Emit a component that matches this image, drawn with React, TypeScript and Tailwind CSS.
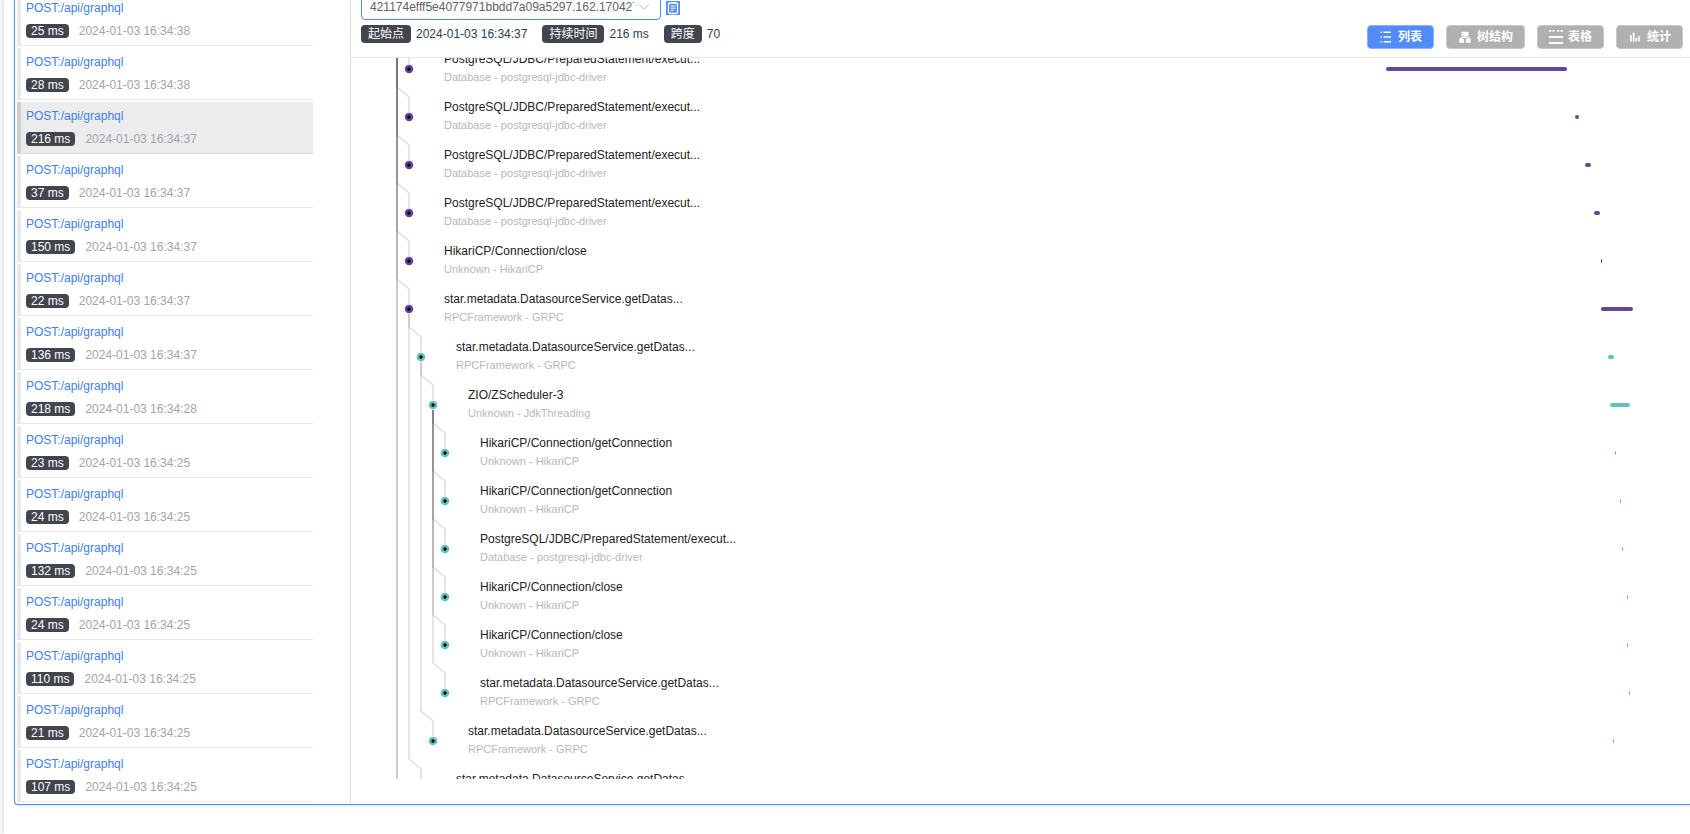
import React from 'react';

const FONT = "font-['Liberation_Sans','Noto_Sans_CJK_SC',sans-serif]";

const traces = [
    { duration: 25, time: '2024-01-03 16:34:38' },
    { duration: 28, time: '2024-01-03 16:34:38' },
    { duration: 216, time: '2024-01-03 16:34:37' },
    { duration: 37, time: '2024-01-03 16:34:37' },
    { duration: 150, time: '2024-01-03 16:34:37' },
    { duration: 22, time: '2024-01-03 16:34:37' },
    { duration: 136, time: '2024-01-03 16:34:37' },
    { duration: 218, time: '2024-01-03 16:34:28' },
    { duration: 23, time: '2024-01-03 16:34:25' },
    { duration: 24, time: '2024-01-03 16:34:25' },
    { duration: 132, time: '2024-01-03 16:34:25' },
    { duration: 24, time: '2024-01-03 16:34:25' },
    { duration: 110, time: '2024-01-03 16:34:25' },
    { duration: 21, time: '2024-01-03 16:34:25' },
    { duration: 107, time: '2024-01-03 16:34:25' },
];

const SELECTED = 2;

const PREPARED = 'PostgreSQL/JDBC/PreparedStatement/execut...';
const DATASOURCE = 'star.metadata.DatasourceService.getDatas...';
const JDBC = 'Database - postgresql-jdbc-driver';
const HIKARI = 'Unknown - HikariCP';
const GRPC = 'RPCFramework - GRPC';

// start and length are percentages of the timeline column,
// parent is the row index of the parent span (-2 is scrolled out above)
const spans = [
    { name: PREPARED, layer: JDBC, depth: 1, parent: -2, start: 66.2, length: 20.1 },
    { name: PREPARED, layer: JDBC, depth: 1, parent: -2, start: 87.25, length: 0.42 },
    { name: PREPARED, layer: JDBC, depth: 1, parent: -2, start: 88.3, length: 0.65 },
    { name: PREPARED, layer: JDBC, depth: 1, parent: -2, start: 89.3, length: 0.65 },
    { name: 'HikariCP/Connection/close', layer: HIKARI, depth: 1, parent: -2, start: 90.12, length: 0.12 },
    { name: DATASOURCE, layer: GRPC, depth: 1, parent: -2, start: 90.12, length: 3.5 },
    { name: DATASOURCE, layer: GRPC, depth: 2, parent: 5, start: 90.9, length: 0.65 },
    { name: 'ZIO/ZScheduler-3', layer: 'Unknown - JdkThreading', depth: 3, parent: 6, start: 91.15, length: 2.2 },
    { name: 'HikariCP/Connection/getConnection', layer: HIKARI, depth: 4, parent: 7, start: 91.67, length: 0.12 },
    { name: 'HikariCP/Connection/getConnection', layer: HIKARI, depth: 4, parent: 7, start: 92.23, length: 0.12 },
    { name: PREPARED, layer: JDBC, depth: 4, parent: 7, start: 92.45, length: 0.12 },
    { name: 'HikariCP/Connection/close', layer: HIKARI, depth: 4, parent: 7, start: 93.01, length: 0.12 },
    { name: 'HikariCP/Connection/close', layer: HIKARI, depth: 4, parent: 7, start: 93.01, length: 0.12 },
    { name: DATASOURCE, layer: GRPC, depth: 4, parent: 7, start: 93.23, length: 0.12 },
    { name: DATASOURCE, layer: GRPC, depth: 3, parent: 6, start: 91.45, length: 0.12 },
    { name: DATASOURCE, layer: GRPC, depth: 2, parent: 5, start: 93.3, length: 0.12 },
];

// siblings that end below the visible part of the tree
const hiddenLinks = [
    { depth: 1, parent: -2, row: 18 },
    { depth: 1, parent: -2, row: 20 },
];

const ROW = 48;
const STEP = 12;

const dotX = (depth: number) => 5 + depth * STEP;
const dotY = (row: number) => row * ROW + ROW / 2;

const linkPath = (depth: number, parent: number, row: number) => {
    const sx = dotX(depth - 1);
    const x = dotX(depth);
    const y = dotY(row);
    return `M${sx} ${dotY(parent) + 5}L${sx} ${y - 30}L${x} ${y - 20}L${x} ${y - 5}`;
};

const spanColor = (row: number) => (row < 6 ? '#61469b' : '#65c0ba');

const ListIcon = () => (
    <svg viewBox="0 0 14 14" className="size-3.5" fill="currentColor" aria-hidden="true">
        <path d="M1.500 1.500H3V3H1.500zM1.500 6.300H3v1.500H1.500zM1.500 11H3v1.500H1.500zM4.500 1.500H12V3H4.500zM4.500 6.300H12v1.500H4.500zM4.500 11H12v1.500H4.500z" />
    </svg>
);

const TreeIcon = () => (
    <svg viewBox="0 0 14 14" className="size-3.5" fill="currentColor" aria-hidden="true">
        <path d="M3.500 1.800h7v4.200H8.200v.7h2.400l1.500 1.700v.6h.6v3.700H7.900V9h1.900V8H4.200v1h1.900v3.700H1.300V9h.6v-.6l1.500-1.700h2.400V6H3.500z" />
    </svg>
);

const TableIcon = () => (
    <svg viewBox="0 0 14 14" className="size-3.5" fill="currentColor" aria-hidden="true">
        <path d="M0 0h2.200v1.800H0zM3.500 0h2v1.800h-2zM8 0h2.200v1.800H8zM11.500 0h2.200v1.800h-2.200zM0 6h14v2H0zM0 12h14v2H0z" />
    </svg>
);

const StatIcon = () => (
    <svg viewBox="0 0 14 14" className="size-3.5" fill="currentColor" aria-hidden="true">
        <path d="M2 5h1.700v6.500H2zM4.800 2.500h1.700v9H4.800zM7.600 8h1.600v3.500H7.600zM10.200 6h1.500v5.500h-1.500z" />
    </svg>
);

const views = [
    { label: '列表', icon: <ListIcon />, active: true },
    { label: '树结构', icon: <TreeIcon />, active: false },
    { label: '表格', icon: <TableIcon />, active: false },
    { label: '统计', icon: <StatIcon />, active: false },
];

const summary = [
    { label: '起始点', value: '2024-01-03 16:34:37' },
    { label: '持续时间', value: '216 ms' },
    { label: '跨度', value: '70' },
];

const TraceList = () => (
    <ul className="w-[336px] shrink-0 border-r border-[#dcdcdc] pl-0.5 pr-[37px] -mt-1.5 flex flex-col gap-0.5 pb-0.5">
        {traces.map((trace, i) => (
            <li
                key={i}
                className={`h-[52px] border-b border-l-4 pl-[5px] pt-[5px] ${
                    i === SELECTED
                        ? 'bg-[#ececec] border-b-[#d8d8d8] border-l-[#d0d0d0]'
                        : 'border-b-[#e8e8e8] border-l-[#e9e9e9]'
                }`}
            >
                <a href="#trace" className="block leading-[18px] text-[#4280ea]">
                    POST:/api/graphql
                </a>
                <div className="mt-[7px] flex items-center gap-2.5 leading-[14px]">
                    <span className="rounded bg-[#40454e] px-[5px] text-white">{trace.duration} ms</span>
                    <span className="text-[#a0a4ae]">{trace.time}</span>
                </div>
            </li>
        ))}
    </ul>
);

const TraceHeader = () => (
    <header className="h-[58px] shrink-0 border-b border-[#e6e6e6] pl-2.5 pr-[7px]">
        <div className="-mt-[7px] flex items-center gap-[5px]">
            <div className="flex h-[27px] w-[300px] items-center gap-1 rounded border border-[#4f87ee] px-2">
                <input
                    type="text"
                    aria-label="Trace ID"
                    readOnly
                    defaultValue="421174efff5e4077971bbdd7a09a5297.162.17042708771234567"
                    className="w-[264px] text-[#606266] outline-none"
                />
                <svg viewBox="0 0 12 12" className="size-3 shrink-0" fill="none" stroke="#b4b8c0" aria-hidden="true">
                    <path d="M1 3.500 6 8.500 11 3.500" />
                </svg>
            </div>
            <button type="button" aria-label="Copy" className="mt-[3px]">
                <svg viewBox="0 0 14 14" className="size-3.5" aria-hidden="true">
                    <rect width="14" height="14" fill="#5a8ff5" />
                    <rect x="2.500" y="2" width="9" height="10.500" rx="1.500" fill="none" stroke="#fff" strokeWidth="1.300" />
                    <path d="M4.500 1.500h5M4.800 5h4.600M4.800 7.200h4.600M4.800 9.400h2.800" stroke="#fff" />
                </svg>
            </button>
        </div>
        <div className="flex items-start justify-between pt-[5px]">
            <dl className="flex gap-[15px] leading-[18px]">
                {summary.map((item) => (
                    <div key={item.label} className="flex gap-[5px]">
                        <dt className="rounded bg-[#40454e] px-[7px] text-white">{item.label}</dt>
                        <dd className="text-[#2c3e50]">{item.value}</dd>
                    </div>
                ))}
            </dl>
            <div className="flex gap-3">
                {views.map((view) => (
                    <button
                        key={view.label}
                        type="button"
                        className={`flex h-6 items-center gap-[5px] rounded-sm border px-[11px] font-bold text-white ${
                            view.active ? 'border-[#8fb3f8] bg-[#528cf8]' : 'border-[#c8c8c8] bg-[#b0b0b0]'
                        }`}
                    >
                        {view.icon}
                        {view.label}
                    </button>
                ))}
            </div>
        </div>
    </header>
);

const SpanTree = () => (
    <div className="mb-[25px] h-0 grow overflow-hidden">
        <div className="relative -mt-[13px] ml-[41px]">
            <svg className="absolute left-0 top-0 h-full w-40" aria-hidden="true">
                <g fill="none" stroke="rgba(0,0,0,0.1)" strokeWidth="2">
                    {spans.map((span, i) => (
                        <path key={i} d={linkPath(span.depth, span.parent, i)} />
                    ))}
                    {hiddenLinks.map((link) => (
                        <path key={link.row} d={linkPath(link.depth, link.parent, link.row)} />
                    ))}
                </g>
                {spans.map((span, i) => (
                    <circle
                        key={i}
                        cx={dotX(span.depth)}
                        cy={dotY(i)}
                        r="3"
                        fill="#000"
                        stroke={spanColor(i)}
                        strokeWidth="2.600"
                    />
                ))}
            </svg>
            {spans.map((span, i) => (
                <div key={i} className="flex h-12">
                    <div
                        className="w-[398px] shrink-0 pt-[5px] leading-[18px] whitespace-nowrap"
                        style={{ paddingLeft: dotX(span.depth) + 35 }}
                    >
                        <p className="text-[#222]">{span.name}</p>
                        <p className="text-[11px] text-[#b8b8b8]">{span.layer}</p>
                    </div>
                    <div className="flex grow items-center">
                        <div
                            className="h-1 rounded-sm"
                            style={{
                                marginLeft: `${span.start}%`,
                                width: `${span.length}%`,
                                backgroundColor: spanColor(i),
                            }}
                        />
                    </div>
                </div>
            ))}
        </div>
    </div>
);

export default function App() {
    return (
        <div className={`h-screen overflow-hidden bg-[#f6f7f9] pl-1 text-xs ${FONT}`}>
            <div className="h-full bg-white pl-2.5 shadow-[0_0_3px_rgba(0,0,0,0.15)]">
                <div className="flex rounded-bl border-b border-l border-[#5c8fdc] shadow-[0_1px_3px_rgba(68,141,254,0.25)]">
                    <TraceList />
                    <main className="flex min-w-0 grow flex-col">
                        <TraceHeader />
                        <SpanTree />
                    </main>
                </div>
            </div>
        </div>
    );
}
